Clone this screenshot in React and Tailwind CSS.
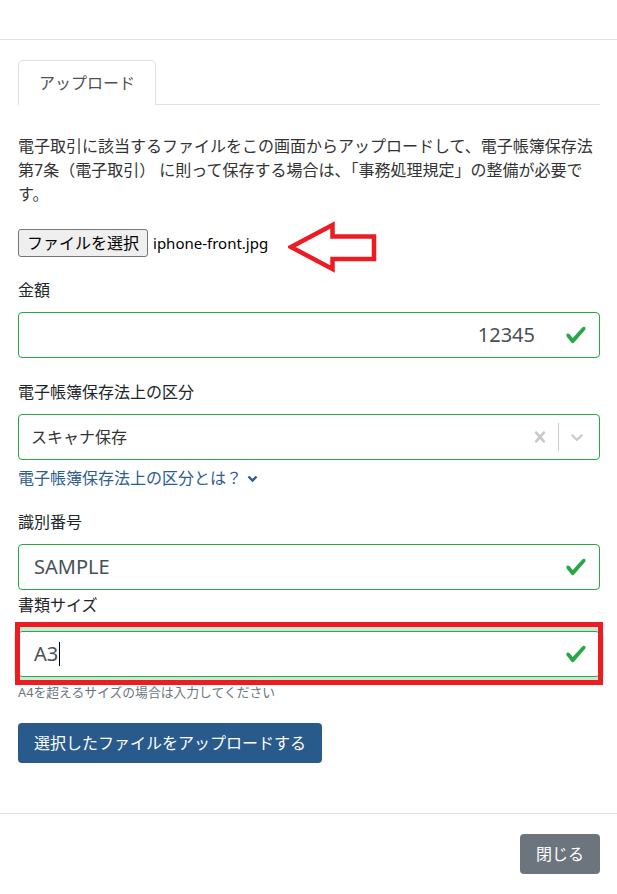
import React from "react";

const font = "font-['Noto_Sans','Noto_Sans_CJK_JP',sans-serif]";

// bootstrap valid check
function Check() {
  return (
    <svg viewBox="0 0 8 8" className="w-[22px] h-[22px] shrink-0">
      <path
        fill="#28a745"
        d="M2.3 6.73L.6 4.53c-.4-1.04.46-1.4 1.1-.8l1.1 1.4 3.4-3.8c.6-.63 1.6-.27 1.2.7l-4 4.6c-.43.5-.8.4-1.1.1z"
      />
    </svg>
  );
}

function Chevron({ color, size }) {
  return (
    <svg viewBox="0 0 20 20" width={size} height={size} fill={color}>
      <path d="M4.516 7.548c0.436-0.446 1.043-0.481 1.576 0l3.908 3.747 3.908-3.747c0.533-0.481 1.141-0.446 1.574 0 0.436 0.445 0.408 1.197 0 1.615-0.406 0.418-4.695 4.502-4.695 4.502-0.217 0.223-0.502 0.335-0.787 0.335s-0.57-0.112-0.789-0.335c0 0-4.287-4.084-4.695-4.502s-0.436-1.17 0-1.615z" />
    </svg>
  );
}

function Label({ children, className = "" }) {
  return <div className={"text-[16px] leading-[24px] text-[#212529] " + className}>{children}</div>;
}

export default function App() {
  return (
    <div className={"min-h-screen bg-white text-[#212529] " + font}>
      {/* header */}
      <div className="h-[40px] border-b border-[#dee2e6]" />

      {/* body */}
      <div className="pl-[18px] pr-[17px] pt-[20px] pb-[50px]">
        {/* tabs */}
        <div className="flex border-b border-[#dee2e6]">
          <div className="-mb-px h-[45px] px-[20px] flex items-center bg-white border border-b-0 border-[#dee2e6] rounded-t-[5px] text-[16px] text-[#495057]">
            アップロード
          </div>
        </div>

        <p className="mt-[29px] text-[16px] leading-[24px] text-[#333]">
          電子取引に該当するファイルをこの画面からアップロードして、電子帳簿保存法第7条（電子取引） に則って保存する場合は、「事務処理規定」の整備が必要です。
        </p>

        {/* file input */}
        <div className="relative mt-[23px] flex items-center h-[28px]">
          <div className="h-[28px] px-[8px] flex items-center bg-[#efefef] border border-[#767676] rounded-[3px] text-[16px] text-black">
            ファイルを選択
          </div>
          <span className="ml-[5px] text-[15px] text-black">iphone-front.jpg</span>
          <svg
            className="absolute left-[270px] top-[-8px]"
            width="92"
            height="52"
            viewBox="0 0 92 52"
          >
            <polygon
              points="3,26 44.5,4 44.5,15.5 86,15.5 86,38 44.5,38 44.5,48"
              fill="none"
              stroke="#ed1c24"
              strokeWidth="4.5"
            />
          </svg>
        </div>

        {/* 金額 */}
        <Label className="mt-[21px]">金額</Label>
        <div className="mt-[10px] h-[46px] flex items-center justify-end border border-[#28a745] rounded-[4px] pr-[12px]">
          <span className="text-[20px] text-[#495057] mr-[30px]">12345</span>
          <Check />
        </div>

        {/* 区分 */}
        <Label className="mt-[22px]">電子帳簿保存法上の区分</Label>
        <div className="mt-[10px] h-[46px] flex items-center border border-[#28a745] rounded-[4px]">
          <span className="flex-1 pl-[12px] text-[16px] text-[#333]">スキャナ保存</span>
          <div className="flex items-center pr-[4px]">
            <div className="p-[7px]">
              <svg viewBox="0 0 20 20" width="22" height="22" fill="#c8c8c8">
                <path d="M14.348 14.849c-0.469 0.469-1.229 0.469-1.697 0l-2.651-3.030-2.651 3.029c-0.469 0.469-1.229 0.469-1.697 0-0.469-0.469-0.469-1.229 0-1.697l2.758-3.15-2.759-3.152c-0.469-0.469-0.469-1.228 0-1.697s1.228-0.469 1.697 0l2.652 3.031 2.651-3.031c0.469-0.469 1.228-0.469 1.697 0s0.469 1.229 0 1.697l-2.758 3.152 2.758 3.15c0.469 0.469 0.469 1.229 0 1.698z" />
              </svg>
            </div>
            <div className="w-px h-[28px] bg-[#cccccc]" />
            <div className="p-[8px]">
              <Chevron color="#cccccc" size={20} />
            </div>
          </div>
        </div>

        <div className="mt-[6px] flex items-center text-[16px] leading-[24px] text-[#2b5d8e]">
          電子帳簿保存法上の区分とは？
          <svg className="ml-[5px] mt-[2px]" width="11" height="8" viewBox="0 0 11 8">
            <path d="M1.5 1.5 L5.5 5.5 L9.5 1.5" fill="none" stroke="#2b5d8e" strokeWidth="2.4" />
          </svg>
        </div>

        {/* 識別番号 */}
        <Label className="mt-[20px]">識別番号</Label>
        <div className="mt-[10px] h-[46px] flex items-center border border-[#28a745] rounded-[4px] pl-[15px] pr-[12px]">
          <span className="flex-1 text-[20px] text-[#495057]">SAMPLE</span>
          <Check />
        </div>

        {/* 書類サイズ */}
        <Label className="mt-[3px]">書類サイズ</Label>
        <div className="relative mt-[14px]">
          <div className="h-[46px] flex items-center border border-[#28a745] rounded-[4px] pl-[15px] pr-[12px] shadow-[0_0_0_4px_rgba(40,167,69,0.25)]">
            <span className="text-[20px] text-[#495057]">A3</span>
            <span className="ml-[1px] w-px h-[24px] bg-black" />
            <span className="flex-1" />
            <Check />
          </div>
          <div className="absolute left-[-3px] right-[-3px] top-[-9px] bottom-[-8px] border-[5px] border-[#ed1c24]" />
        </div>
        <div className="mt-[5px] text-[12.8px] leading-[20px] text-[#6c757d]">
          A4を超えるサイズの場合は入力してください
        </div>

        <button className="mt-[21px] px-[16px] py-[8px] rounded-[4px] bg-[#295a8c] text-white text-[16px] leading-[24px]">
          選択したファイルをアップロードする
        </button>
      </div>

      {/* footer */}
      <div className="border-t border-[#dee2e6] pl-[18px] pr-[17px] pt-[20px] flex justify-end">
        <button className="px-[16px] py-[8px] rounded-[4px] bg-[#6c757d] text-white text-[16px] leading-[24px]">
          閉じる
        </button>
      </div>
    </div>
  );
}
